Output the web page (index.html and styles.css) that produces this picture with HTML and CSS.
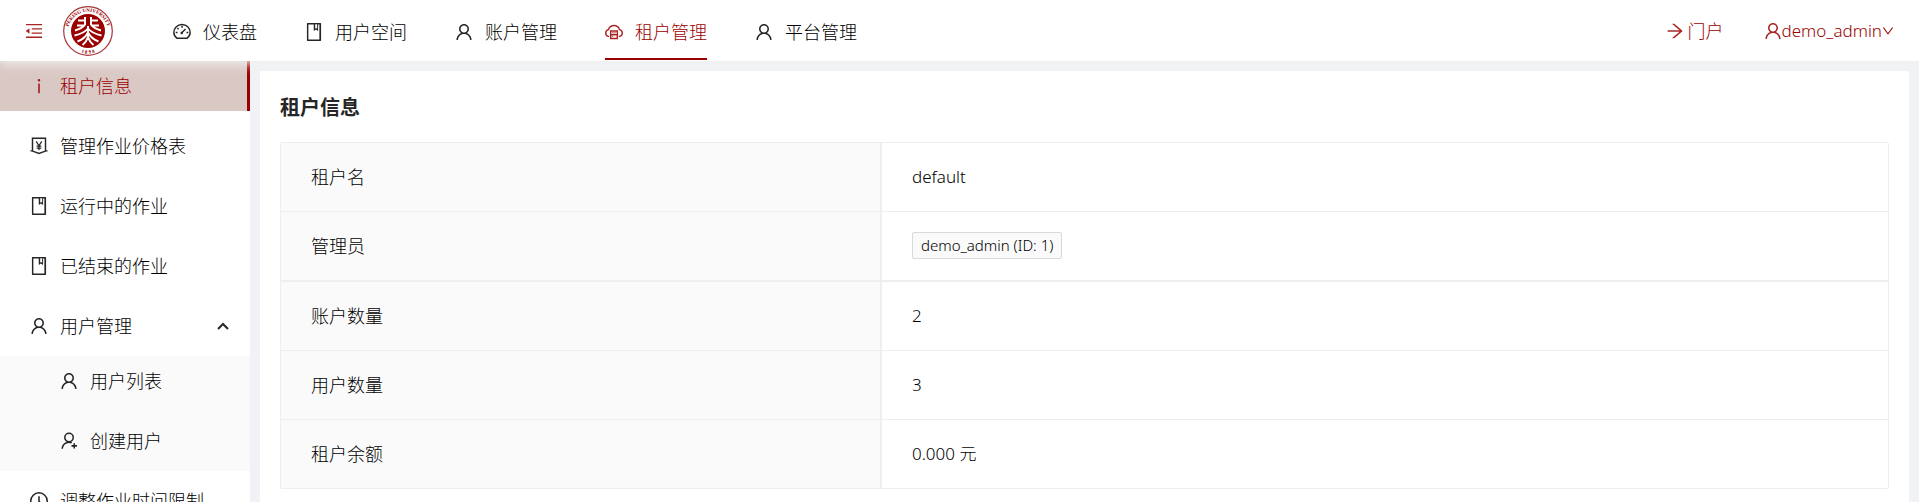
FILE: index.html
```html
<!DOCTYPE html>
<html lang="zh-CN">
<head>
<meta charset="utf-8">
<meta name="viewport" content="width=device-width, initial-scale=1">
<title>租户信息</title>
<link rel="stylesheet" href="styles.css">
</head>
<body>
<svg class="sprite" aria-hidden="true">
  <symbol id="user" viewBox="64 64 896 896"><path d="M858.5 763.6a374 374 0 0 0-80.6-119.5 375.63 375.63 0 0 0-119.5-80.6c-.4-.2-.8-.3-1.2-.5C719.5 518 760 444.7 760 362c0-137-111-248-248-248S264 225 264 362c0 82.7 40.5 156 102.8 201.1-.4.2-.8.3-1.2.5-44.8 18.9-85 46-119.5 80.6a375.63 375.63 0 0 0-80.6 119.5A371.7 371.7 0 0 0 136 901.8a8 8 0 0 0 8 8.2h60c4.4 0 7.9-3.5 8-7.8 2-77.2 33-149.5 87.8-204.3 56.7-56.7 132-87.9 212.2-87.9s155.5 31.2 212.2 87.9C779 752.7 810 825 812 902.2c.1 4.4 3.6 7.8 8 7.8h60a8 8 0 0 0 8-8.2c-1-47.8-10.9-94.3-29.5-138.2zM512 534c-45.9 0-89.1-17.9-121.6-50.4S340 407.9 340 362c0-45.9 17.9-89.1 50.4-121.6S466.1 190 512 190s89.1 17.9 121.6 50.4S684 316.1 684 362c0 45.9-17.9 89.1-50.4 121.6S557.9 534 512 534z"/></symbol>
  <symbol id="user-add" viewBox="64 64 896 896"><g fill="none" stroke="currentColor" stroke-width="76"><circle cx="512" cy="340" r="210"/><path d="M174 900C180 700 330 572 512 572c50 0 96 9 136 26M772 620v270M637 755h270"/></g></symbol>
  <symbol id="book" viewBox="64 64 896 896"><path d="M832 64H192c-17.7 0-32 14.3-32 32v832c0 17.7 14.3 32 32 32h640c17.7 0 32-14.3 32-32V96c0-17.7-14.3-32-32-32zM668 345.9L621.5 312 572 347.4V124h96v221.9zM792 888H232V136h268v296.9c0 3.3 1 6.6 3 9.3a15.9 15.9 0 0 0 22.3 3.7l83.8-59.9 81.4 59.4c2.7 2 6 3.1 9.4 3.1 8.8 0 16-7.2 16-16V136h64v752z"/></symbol>
  <symbol id="arrow" viewBox="64 64 896 896"><path d="M869 487.8L491.2 159.9c-2.9-2.5-6.6-3.9-10.5-3.9h-88.5c-7.4 0-10.8 9.2-5.2 14l350.2 304H152c-4.4 0-8 3.6-8 8v60c0 4.4 3.6 8 8 8h585.1L386.9 854c-5.6 4.9-2.2 14 5.2 14h91.5c1.9 0 3.8-.7 5.2-2L869 536.2a32.07 32.07 0 0 0 0-48.4z"/></symbol>
  <symbol id="down" viewBox="64 64 896 896"><path d="M884 256h-75c-5.1 0-9.9 2.5-12.9 6.6L512 654.2 227.9 262.6c-3-4.1-7.8-6.6-12.9-6.6h-75c-6.5 0-10.3 7.4-6.5 12.7l352.6 486.1c12.8 17.6 39 17.6 51.7 0l352.6-486.1c3.9-5.3.1-12.7-6.4-12.7z"/></symbol>
  <symbol id="info" viewBox="64 64 896 896"><path d="M448 224a64 64 0 1 0 128 0 64 64 0 1 0-128 0zm96 168h-64c-4.400 0-8 3.600-8 8v464c0 4.400 3.600 8 8 8h64c4.400 0 8-3.600 8-8V400c0-4.400-3.600-8-8-8z"/></symbol>
  <symbol id="fold" viewBox="64 64 896 896"><path d="M112 160h800v72H112zM112 792h800v72H112zM400 370h512v72H400zM400 582h512v72H400zM115 519l156 123c6 5 15 1 15-7V389c0-8-9-12-15-7L115 505c-4 4-4 10 0 14z"/></symbol>
  <symbol id="dashboard" viewBox="64 64 896 896"><g fill="none" stroke="currentColor" stroke-width="72"><path d="M266 828C170 764 106 660 106 540a406 406 0 0 1 812 0c0 120-64 224-160 288z" stroke-linejoin="round"/><path d="M512 206v90M200 538h90M734 538h90M282 308l62 62M500 550l190-190"/></g><circle cx="500" cy="556" r="62"/></symbol>
  <symbol id="cloud" viewBox="64 64 896 896"><g fill="none" stroke="currentColor" stroke-width="72"><path d="M270 742C170 730 100 660 100 566c0-86 58-150 136-172C280 270 384 190 512 190s232 80 276 204c78 22 136 86 136 172 0 94-70 164-170 176"/><path d="M346 462h332v374H346zM346 650h332"/></g><path d="M410 534h200v44H410zM410 718h60v44h-60z"/></symbol>
  <symbol id="money" viewBox="64 64 896 896"><g fill="none" stroke="currentColor" stroke-width="72"><path d="M188 756V128h648v628"/><path d="M86 754h76l350 132 350-132h76"/><path d="M376 284l136 218 136-218M512 490v236M394 522h236M394 616h236" stroke-width="60"/></g></symbol>
  <symbol id="clock" viewBox="64 64 896 896"><g fill="none" stroke="currentColor" stroke-width="76"><circle cx="512" cy="512" r="410"/><path d="M512 272v272l168 120"/></g></symbol>
</svg>

<header class="header">
  <button class="fold" type="button" aria-label="收起菜单"><svg class="icon"><use href="#fold"/></svg></button>
  <a class="brand" href="#" aria-label="首页">
    <svg class="logo" viewBox="0 0 50 50">
      <defs>
        <path id="ring-top" d="M6 32A20 20 0 1 1 44 32"/>
        <path id="ring-bottom" d="M10 42A23 23 0 0 0 40 42"/>
      </defs>
      <circle cx="25" cy="25" r="24.300" fill="#fff" stroke="#a83236" stroke-width="1.200"/>
      <circle cx="25" cy="25" r="17" fill="#9b0000"/>
      <text class="ring"><textPath href="#ring-top" startOffset="50%" text-anchor="middle">PEKING UNIVERSITY</textPath></text>
      <text class="ring"><textPath href="#ring-bottom" startOffset="50%" text-anchor="middle">1 8 9 8</textPath></text>
      <g fill="none" stroke="#fff" stroke-width="2">
        <path d="M22 11v7.500Q20 22 12 24.500M15 14.500h7M14 19.500h7.500M28 11v7.500Q30 22 38 24.500M35 14.500h-7M36 19.500h-7.500"/>
        <path d="M25 20v12M25 22.500Q21 27.500 11.500 29.500M25 22.500Q29 27.500 38.500 29.500M25 26.500Q22 32.500 14.500 35.500M25 26.500Q28 32.500 35.500 35.500M25 31Q23.500 36 19.500 39M25 31Q26.500 36 30.500 39"/>
      </g>
    </svg>
  </a>
  <nav class="nav">
    <a class="nav-item" href="#"><svg class="icon"><use href="#dashboard"/></svg>仪表盘</a>
    <a class="nav-item" href="#"><svg class="icon"><use href="#book"/></svg>用户空间</a>
    <a class="nav-item" href="#"><svg class="icon"><use href="#user"/></svg>账户管理</a>
    <a class="nav-item active" href="#" aria-current="page"><svg class="icon"><use href="#cloud"/></svg>租户管理</a>
    <a class="nav-item" href="#"><svg class="icon"><use href="#user"/></svg>平台管理</a>
  </nav>
  <div class="actions">
    <a class="portal" href="#"><svg class="icon"><use href="#arrow"/></svg>门户</a>
    <button class="account" type="button"><svg class="icon"><use href="#user"/></svg>demo_admin<svg class="icon-small"><use href="#down"/></svg></button>
  </div>
</header>

<div class="body">
  <aside class="sidebar">
    <a class="item selected" href="#" aria-current="page"><svg class="icon"><use href="#info"/></svg>租户信息</a>
    <a class="item" href="#"><svg class="icon"><use href="#money"/></svg>管理作业价格表</a>
    <a class="item" href="#"><svg class="icon"><use href="#book"/></svg>运行中的作业</a>
    <a class="item" href="#"><svg class="icon"><use href="#book"/></svg>已结束的作业</a>
    <button class="item" type="button" aria-expanded="true"><svg class="icon"><use href="#user"/></svg>用户管理<svg class="caret" viewBox="0 0 12 12"><path d="M1 9l5-5 5 5"/></svg></button>
    <div class="submenu">
      <a class="item" href="#"><svg class="icon"><use href="#user"/></svg>用户列表</a>
      <a class="item" href="#"><svg class="icon"><use href="#user-add"/></svg>创建用户</a>
    </div>
    <a class="item" href="#"><svg class="icon"><use href="#clock"/></svg>调整作业时间限制</a>
  </aside>
  <main class="content">
    <section class="card">
      <h1 class="title">租户信息</h1>
      <table class="info">
        <tbody>
          <tr><th scope="row">租户名</th><td>default</td></tr>
          <tr class="group-end"><th scope="row">管理员</th><td><span class="tag">demo_admin (ID: 1)</span></td></tr>
          <tr><th scope="row">账户数量</th><td>2</td></tr>
          <tr><th scope="row">用户数量</th><td>3</td></tr>
          <tr><th scope="row">租户余额</th><td>0.000 元</td></tr>
        </tbody>
      </table>
    </section>
  </main>
</div>
</body>
</html>
```
FILE: styles.css
```css
* { box-sizing: border-box; }

html, body { height: 100%; }

body {
  margin: 0;
  display: flex;
  flex-direction: column;
  overflow: hidden;
  background: #f0f2f5;
  color: #000;
  font: 300 18px/28px "Noto Sans", "Noto Sans CJK SC", sans-serif;
}

a, button { color: inherit; font: inherit; text-decoration: none; }
button { border: 0; padding: 0; background: none; cursor: pointer; }

.sprite { display: none; }
.icon { width: 18px; height: 18px; flex: none; fill: currentColor; opacity: 0.85; }
.icon-small { width: 12px; height: 12px; flex: none; fill: currentColor; }

.header {
  position: relative;
  z-index: 1;
  flex: none;
  display: flex;
  align-items: center;
  height: 61px;
  padding: 0 25px;
  background: #fff;
  box-shadow: 0 3px 10px #f0f1f2;
}
.fold, .portal, .account { color: #9b0000; }
.fold { display: flex; }
.brand { display: flex; margin-left: 20px; }
.logo { width: 50px; height: 50px; }
.ring { fill: #9b0000; font: 700 5px "Liberation Serif", serif; }

.nav { display: flex; gap: 48px; margin-left: 60px; height: 100%; }
.nav-item {
  display: flex;
  align-items: center;
  gap: 12px;
  border-top: 3px solid transparent;
  border-bottom: 1px solid transparent;
}
.nav-item.active { color: #9b0000; box-shadow: inset 0 -2px #9b0000; }

.actions { display: flex; align-items: center; gap: 40px; margin-left: auto; }
.portal { display: flex; align-items: center; gap: 4px; }
.account { display: flex; align-items: center; font-size: 17px; }

.body { flex: 1; display: flex; min-height: 0; }

.sidebar {
  flex: none;
  display: flex;
  flex-direction: column;
  gap: 10px;
  width: 250px;
  overflow: hidden;
  background: #fff;
}
.item {
  flex: none;
  display: flex;
  align-items: center;
  gap: 12px;
  width: 100%;
  height: 50px;
  padding: 0 21px 0 30px;
  text-align: left;
}
.item.selected {
  color: #9b0000;
  background: #dac8c4;
  border-right: 3px solid #9b0000;
}
.caret {
  width: 12px;
  height: 12px;
  margin-left: auto;
  fill: none;
  stroke: #262626;
  stroke-width: 2;
}
.submenu {
  flex: none;
  display: flex;
  flex-direction: column;
  gap: 10px;
  margin: -5px 0;
  padding-bottom: 5px;
  background: #fafafa;
}
.submenu .item { padding-left: 60px; }

.content { flex: 1; display: flex; min-width: 0; padding: 10px 10px 0; }
.card { flex: 1; min-width: 0; padding: 22px 20px 0; background: #fff; }
.title {
  margin: 0;
  padding-bottom: 19px;
  color: #262626;
  font-size: 20px;
  line-height: 30px;
  font-weight: 700;
}

.info {
  width: 100%;
  table-layout: fixed;
  border: 1px solid #eee;
  border-collapse: separate;
  border-spacing: 0;
  border-radius: 2px;
}
.info th, .info td {
  padding: 20px 30px;
  border-bottom: 1px solid #eee;
  font-weight: 300;
  text-align: left;
}
.info td { font-size: 17px; }
.info th {
  width: 37.4%;
  background: #fafafa;
  border-right: 2px solid #eee;
}
.info .group-end th, .info .group-end td { border-bottom-width: 2px; }
.info tr:last-child th, .info tr:last-child td { border-bottom: 0; }

.tag {
  display: inline-block;
  padding: 0 8px;
  border: 1px solid #d9d9d9;
  border-radius: 2px;
  background: #fafafa;
  font-size: 15px;
  line-height: 25px;
  vertical-align: top;
}
```
